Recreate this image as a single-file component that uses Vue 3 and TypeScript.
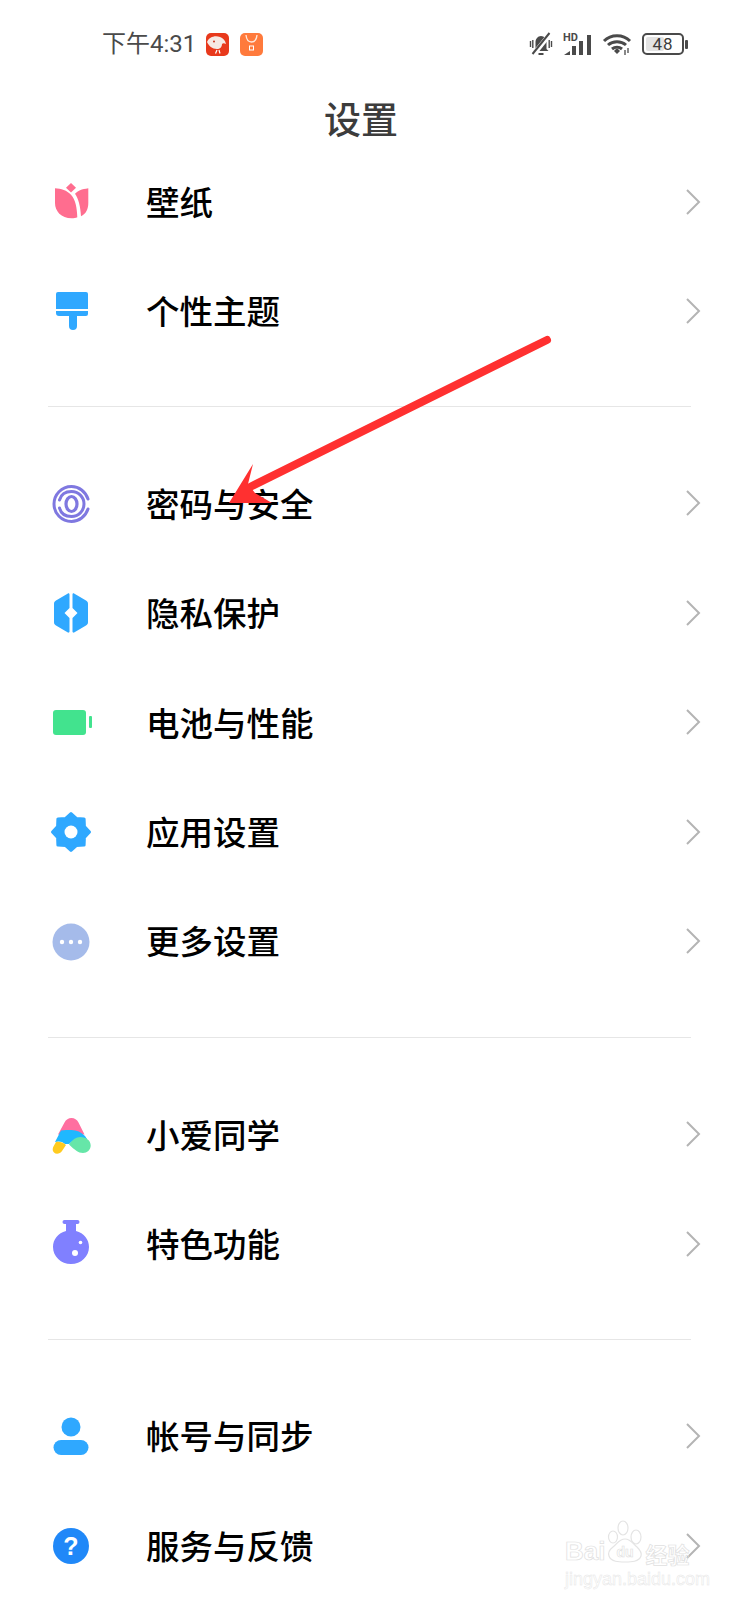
<script setup lang="ts">
type Row = { icon: string; label: string };

const groups: Row[][] = [
  [
    { icon: 'tulip', label: '壁纸' },
    { icon: 'brush', label: '个性主题' },
  ],
  [
    { icon: 'finger', label: '密码与安全' },
    { icon: 'shield', label: '隐私保护' },
    { icon: 'battery', label: '电池与性能' },
    { icon: 'gear', label: '应用设置' },
    { icon: 'more', label: '更多设置' },
  ],
  [
    { icon: 'xiaoai', label: '小爱同学' },
    { icon: 'flask', label: '特色功能' },
  ],
  [
    { icon: 'user', label: '帐号与同步' },
    { icon: 'help', label: '服务与反馈' },
  ],
];
</script>

<template>
  <div class="page">
    <header class="status">
      <div class="status-left">
        <span class="time">下午4:31</span>
        <svg class="app-icon" viewBox="0 0 23 23" width="23" height="23">
          <rect width="23" height="23" rx="5" fill="#e8391c" />
          <path d="M1 9c2-5 8-7 13-5 3 1 5 3 6 7-2-1-3-1-4 0 0 3-2 5-5 5-5 0-8-3-10-7z" fill="#f6e9e4" />
          <circle cx="8" cy="8.500" r="1" fill="#c8331c" />
          <path d="M11 17l-1.500 3.500M13 17l1 3.500" stroke="#fff" stroke-width="1.200" fill="none" />
        </svg>
        <svg class="app-icon second" viewBox="0 0 23 23" width="23" height="23">
          <rect width="23" height="23" rx="5" fill="#ff7a3c" />
          <path d="M6 2c.5 5 3 7 5.500 7S16.500 7 17 2" stroke="#ffe9dc" stroke-width="1.300" fill="none" />
          <rect x="9.500" y="13" width="4" height="4" fill="none" stroke="#fff" stroke-width="1" />
        </svg>
      </div>
      <div class="status-right">
        <svg viewBox="0 0 24 24" width="24" height="24">
          <path d="M6.500 17V10c0-3 2.500-6 5.500-6s5.500 3 5.500 6v7l2 2H4.500z" fill="#4a4a4a" />
          <path d="M9.500 22h5" stroke="#4a4a4a" stroke-width="2" />
          <path d="M1.500 9v6M3.800 8v8M22.500 9v6M20.200 8v8" stroke="#4a4a4a" stroke-width="1.400" />
          <path d="M4 23L21 2" stroke="#fff" stroke-width="5" />
          <path d="M3.500 22L20.500 1" stroke="#4a4a4a" stroke-width="2" />
        </svg>
        <div class="signal">
          <span class="hd">HD</span>
          <svg viewBox="0 0 29 20" width="29" height="20">
            <path d="M1 20l6-4v4zM9 20v-9h4v9zM16 20V6h4v14zM24 20V0h4v20z" fill="#4a4a4a" />
          </svg>
        </div>
        <svg viewBox="0 0 30 22" width="30" height="22">
          <path d="M2 8c7-7 19-7 26 0M6 12c5-4.500 13-4.500 18 0M10 16c3-2.500 7-2.500 10 0" fill="none" stroke="#4a4a4a" stroke-width="3" />
          <path d="M12 18l3-3 3 3-3 3z" fill="#4a4a4a" />
          <path d="M23 17v5M26 15v5" stroke="#4a4a4a" stroke-width="1.300" />
        </svg>
        <div class="battery">
          <div class="battery-body">
            <span class="battery-fill"></span>
            <span class="battery-num">48</span>
          </div>
          <span class="battery-tip"></span>
        </div>
      </div>
    </header>

    <h1 class="title">设置</h1>

    <main class="list">
      <section v-for="(group, i) in groups" :key="i" class="group">
        <div v-for="row in group" :key="row.label" class="row">
          <svg class="icon" viewBox="0 0 48 48" width="48" height="48">
            <template v-if="row.icon === 'tulip'">
              <path d="M24 6l5 4.800-5 4.800-5-4.800z" fill="#ff6d8f" />
              <path d="M8 11.300c6 .5 12 2 16 6.500 4.500 5 6 13 6.300 22.500-1.500.7-3.500 1-5.500 1C14 41.300 8 34 8 26z" fill="#ff6d8f" />
              <path d="M41.300 11.300c-3 .5-6 1-8.300 2-2 .8-3.500 2-5 3.500 3.500 5 5.500 13 6 22.500 5-2.300 7.300-7.300 7.300-13.300z" fill="#ff6d8f" />
            </template>
            <template v-else-if="row.icon === 'brush'">
              <path d="M11 6h28a2 2 0 0 1 2 2v15H9V8a2 2 0 0 1 2-2z" fill="#2fa8ff" />
              <path d="M9 25h32v3a2 2 0 0 1-2 2h-9v10a4 4 0 0 1-8 0V30h-10a3 3 0 0 1-3-3z" fill="#2fa8ff" />
            </template>
            <template v-else-if="row.icon === 'finger'">
              <g fill="none" stroke="#7f78e0" stroke-width="3" stroke-linecap="round">
                <path d="M41 19C38.500 11.500 32 6.500 24.500 6.500 14.500 6.500 7 14.500 7 24s7.500 17.500 17.500 17.500c7.500 0 14-5 16.500-12.500" />
                <path d="M12.500 20c1.500-5.500 6-8.500 12-8.500 7 0 12.500 5.500 12.500 12.500s-5.500 12.500-12.500 12.500c-6 0-10.500-3-12-8.500" />
                <ellipse cx="24.500" cy="24" rx="5.500" ry="7.500" stroke-width="3.200" />
              </g>
            </template>
            <template v-else-if="row.icon === 'shield'">
              <path d="M22.500 5.500V19l-5 5 5 5v13.500c0 .8-.8 1.400-1.600 1L9 36.500c-1.500-.8-2-1.800-2-3.500V15c0-1.700.5-2.700 2-3.500l11.900-7c.8-.4 1.600.2 1.600 1z" fill="#2fa8ff" />
              <path d="M25.500 5.500V19l5 5-5 5v13.500c0 .8.8 1.400 1.600 1L39 36.500c1.500-.8 2-1.800 2-3.500V15c0-1.700-.5-2.700-2-3.500l-11.900-7c-.8-.4-1.600.2-1.600 1z" fill="#2fa8ff" />
            </template>
            <template v-else-if="row.icon === 'battery'">
              <rect x="6" y="11" width="33" height="25" rx="3" fill="#42e38e" />
              <rect x="42" y="17" width="3" height="12" rx="1" fill="#42e38e" />
            </template>
            <template v-else-if="row.icon === 'gear'">
              <path d="M24 5.500L29.550 10.600 37.100 10.900 37.400 18.450 42.500 24 37.400 29.550 37.100 37.100 29.550 37.400 24 42.500 18.450 37.400 10.900 37.100 10.600 29.550 5.500 24 10.600 18.450 10.900 10.900 18.450 10.600z" fill="#2fa8ff" stroke="#2fa8ff" stroke-width="3" stroke-linejoin="round" />
              <circle cx="24" cy="24" r="6.500" fill="#fff" />
            </template>
            <template v-else-if="row.icon === 'more'">
              <circle cx="24" cy="24" r="18.500" fill="#a5bbea" />
              <circle cx="15" cy="24" r="2.200" fill="#fff" />
              <circle cx="24" cy="24" r="2.200" fill="#fff" />
              <circle cx="33" cy="24" r="2.200" fill="#fff" />
            </template>
            <template v-else-if="row.icon === 'xiaoai'">
              <path d="M24.500 7c3 0 5.500 1.500 7 4.500l6 12H11l6.500-12c1.500-3 4-4.500 7-4.500z" fill="#ff6fa0" />
              <path d="M8 31l6-11.500c3.500-.5 7-.5 10.500-.5 5.500 0 9.500 2 13.500 6l2 3h-7c-4 0-8 2-11 5h-4c-3-3-7-3-10-2z" fill="#1fb8ff" />
              <path d="M9 31c3-.5 7 0 10 3l-4 6c-2 3-6 3.500-8 1.500s-1.500-4.500 0-7z" fill="#ffcb1f" />
              <path d="M22 33.500c3-4.500 7-7.500 11.500-7.500 5.500 0 10.200 3.500 10.200 8.500 0 4.500-3.700 7.500-7.700 7.500-5 0-8-3-14-8.500z" fill="#66e6a8" />
            </template>
            <template v-else-if="row.icon === 'flask'">
              <g transform="translate(0 -3)">
                <rect x="15.500" y="3" width="17" height="4" rx="2" fill="#8080ff" />
                <path d="M19 6h10v8c8 2 13 8.500 13 16 0 9.500-8 17-18 17S6 39.500 6 30c0-7.500 5-14 13-16z" fill="#8080ff" />
                <circle cx="28" cy="36" r="3" fill="#fff" />
                <circle cx="33.500" cy="25.500" r="1.800" fill="#fff" />
              </g>
            </template>
            <template v-else-if="row.icon === 'user'">
              <circle cx="24" cy="14" r="9.500" fill="#2fa8ff" />
              <rect x="6.500" y="27" width="35" height="15" rx="7.500" fill="#2fa8ff" />
            </template>
            <template v-else-if="row.icon === 'help'">
              <circle cx="24" cy="24" r="18" fill="#2088f8" />
              <text x="24" y="33" text-anchor="middle" class="help-mark">?</text>
            </template>
          </svg>
          <span class="label">{{ row.label }}</span>
          <svg class="chevron" viewBox="0 0 16 28" width="16" height="28">
            <path d="M2 2l12 12L2 26" fill="none" stroke="#b4b4b4" stroke-width="2" />
          </svg>
        </div>
      </section>
    </main>

    <!-- hand drawn arrow from the screenshot annotation -->
    <svg class="arrow" viewBox="0 0 738 1600" width="738" height="1600">
      <path d="M547 340L250 487" stroke="#ff3030" stroke-width="8" stroke-linecap="round" fill="none" />
      <path d="M229 503L253 464 248 484 255 493 272 503z" fill="#ff3030" />
    </svg>

    <div class="watermark">
      <div class="wm-top">
        <span class="wm-bai">Bai</span>
        <svg class="wm-paw" viewBox="0 0 40 44" width="40" height="44">
          <g fill="none" stroke="#e4e4e4" stroke-width="1.200">
            <ellipse cx="8" cy="17" rx="4.500" ry="6" />
            <ellipse cx="18" cy="8" rx="5" ry="7" />
            <ellipse cx="31" cy="17" rx="5" ry="7" />
            <path d="M20 19c-6 0-8 5-12 8-4 3-5 6-4 9 2 6 10 6 16 6s14 0 16-6c1-3-1-6-4-9-4-3-6-8-12-8z" />
          </g>
          <text x="20" y="37" text-anchor="middle" class="wm-du">du</text>
        </svg>
        <span class="wm-cn">经验</span>
      </div>
      <div class="wm-url">jingyan.baidu.com</div>
    </div>
  </div>
</template>

<style scoped>
.page {
  position: relative;
  width: 738px;
  height: 1600px;
  overflow: hidden;
  background: #fff;
  font-family: "Noto Sans CJK SC", "Noto Sans", sans-serif;
}

.status {
  display: flex;
  align-items: center;
  justify-content: space-between;
  height: 88px;
  padding: 0 50px 0 102px;
  box-sizing: border-box;
}

.status-left {
  display: flex;
  align-items: center;
}

.time {
  font-family: "Roboto", "Noto Sans CJK SC", sans-serif;
  font-size: 24px;
  line-height: 1;
  color: #4a4a4a;
}

.app-icon {
  margin-left: 10px;
}

.app-icon.second {
  margin-left: 11px;
}

.status-right {
  display: flex;
  align-items: center;
  gap: 10px;
}

.signal {
  position: relative;
  width: 29px;
  height: 22px;
  display: flex;
  align-items: flex-end;
}

.hd {
  position: absolute;
  left: 0;
  top: -1px;
  font-family: "Roboto", sans-serif;
  font-size: 11px;
  font-weight: 700;
  line-height: 1;
  color: #4a4a4a;
}

.battery {
  display: flex;
  align-items: center;
  gap: 1px;
}

.battery-body {
  position: relative;
  width: 38px;
  height: 18px;
  border: 2.500px solid #4a4a4a;
  border-radius: 5px;
  display: flex;
  align-items: center;
  justify-content: center;
}

.battery-fill {
  position: absolute;
  left: 2px;
  top: 2px;
  bottom: 2px;
  width: 18px;
  background: #e3e3e3;
  border-radius: 2px;
}

.battery-num {
  position: relative;
  font-family: "Roboto", sans-serif;
  font-size: 17px;
  line-height: 1;
  color: #3c3c3c;
  letter-spacing: 1px;
}

.battery-tip {
  width: 3px;
  height: 9px;
  background: #4a4a4a;
  border-radius: 1px;
}

.title {
  margin: 0;
  height: 58px;
  padding-right: 16px;
  line-height: 60px;
  text-align: center;
  font-size: 37px;
  font-weight: 500;
  color: #3c3c3c;
}

.group {
  padding: 0 37px 41px 47px;
}

.group + .group {
  padding-top: 41px;
}

.group + .group::before {
  content: "";
  display: block;
  height: 1px;
  margin: -41px 10px 41px 1px;
  background: #e6e6e6;
}

.group:nth-child(3) {
  margin-top: 1px;
}

.group + .group .icon {
  margin-top: 3px;
}

.row {
  display: flex;
  align-items: center;
  height: 109.400px;
}

.icon {
  flex: none;
}

.label {
  flex: 1;
  margin-left: 51px;
  font-size: 33.500px;
  font-weight: 500;
  line-height: 1;
  color: #000;
}

.chevron {
  flex: none;
  margin-top: 2px;
}

.help-mark {
  font-family: "Liberation Sans", sans-serif;
  font-size: 25px;
  font-weight: 700;
  fill: #fff;
}

.arrow {
  position: absolute;
  left: 0;
  top: 0;
  pointer-events: none;
}

.watermark {
  position: absolute;
  left: 565px;
  top: 1520px;
  width: 140px;
  pointer-events: none;
}

.wm-top {
  display: flex;
  align-items: flex-end;
  height: 44px;
}

.wm-bai,
.wm-cn,
.wm-url,
.wm-du {
  color: transparent;
  -webkit-text-stroke: 0.7px #e0e0e0;
}

.wm-bai {
  font-family: "Liberation Sans", sans-serif;
  font-size: 26px;
  font-weight: 700;
  line-height: 1;
}

.wm-paw {
  flex: none;
}

.wm-du {
  font-family: "Liberation Sans", sans-serif;
  font-size: 14px;
  font-weight: 700;
  fill: transparent;
  stroke: #e0e0e0;
  stroke-width: 0.6px;
}

.wm-cn {
  font-size: 22px;
  font-weight: 700;
  line-height: 1;
}

.wm-url {
  margin-top: 6px;
  font-family: "Liberation Sans", sans-serif;
  font-size: 18px;
  line-height: 1;
  white-space: nowrap;
  -webkit-text-stroke: 0.5px #e6e6e6;
}
</style>
